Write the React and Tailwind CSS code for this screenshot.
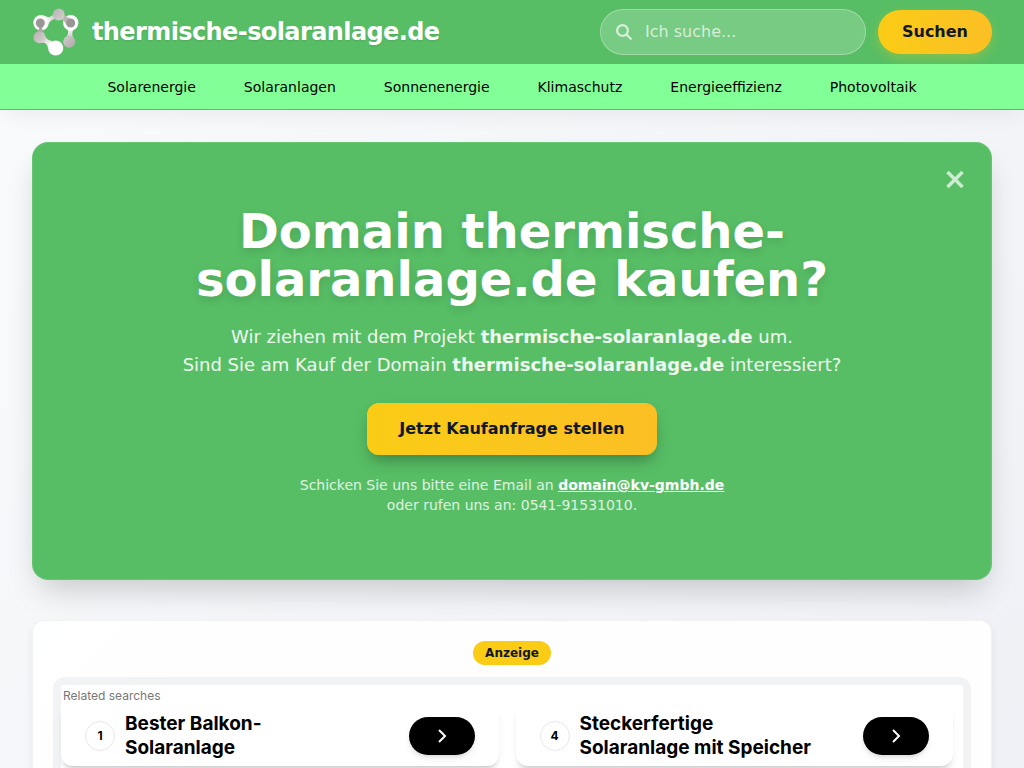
import { useState } from "react";

const navItems = [
  "Solarenergie",
  "Solaranlagen",
  "Sonnenenergie",
  "Klimaschutz",
  "Energieeffizienz",
  "Photovoltaik",
];

const relatedSearches = [
  { number: 1, title: "Bester Balkon-Solaranlage" },
  { number: 4, title: "Steckerfertige Solaranlage mit Speicher" },
];

function Logo() {
  return (
    <svg className="h-12 w-12 shrink-0" viewBox="0 0 48 48" aria-hidden="true">
      <defs>
        <linearGradient id="ball" x1="0" y1="0" x2="1" y2="1">
          <stop offset="0" stopColor="#b5afaf" />
          <stop offset="1" stopColor="#d8d4d4" />
        </linearGradient>
        <linearGradient id="ballDark" x1="0" y1="0" x2="1" y2="1">
          <stop offset="0" stopColor="#d4d0d0" />
          <stop offset="1" stopColor="#aba5a5" />
        </linearGradient>
        <linearGradient id="topLink" x1="0" y1="0" x2="1" y2="0">
          <stop offset="0" stopColor="#ffffff" />
          <stop offset="1" stopColor="#c4bfbf" />
        </linearGradient>
        <linearGradient id="rightLink" x1="0" y1="0" x2="0" y2="1">
          <stop offset="0" stopColor="#ffffff" />
          <stop offset="1" stopColor="#c4bfbf" />
        </linearGradient>
        <linearGradient id="bottomLink" x1="0" y1="0" x2="1" y2="1">
          <stop offset="0" stopColor="#c9c4c4" />
          <stop offset="1" stopColor="#ffffff" />
        </linearGradient>
      </defs>
      <path d="M13 8Q18 11 22 6L25 11Q19 10 15 18Z" fill="url(#topLink)" />
      <path d="M35 20Q38 25 33 31L42 31Q38 25 43 20Z" fill="url(#rightLink)" />
      <path d="M12 26Q14 32 20 33L16 40Q15 34 9 35Z" fill="url(#bottomLink)" />
      <circle cx="9" cy="14.700" r="7.700" fill="#fafafa" />
      <circle cx="38.700" cy="14.700" r="7.700" fill="#ffffff" />
      <path d="M30 3Q32 9 38 10L35 18Q32 11 28 11Z" fill="#bbb5b5" />
      <path d="M5 16Q10 20 3 26L13 26Q8 20 12 16Z" fill="#aaa5a5" />
      <circle cx="26.700" cy="6.500" r="5.900" fill="url(#ball)" />
      <circle cx="8.300" cy="15" r="4.500" fill="#9b9696" />
      <circle cx="38.700" cy="15" r="4.500" fill="#9b9696" />
      <circle cx="7.500" cy="29.300" r="6" fill="url(#ball)" />
      <circle cx="37.200" cy="33.700" r="6" fill="url(#ballDark)" />
      <circle cx="23.700" cy="40" r="7.600" fill="#ffffff" />
    </svg>
  );
}

function Header() {
  return (
    <header className="relative shadow-[0_10px_20px_-4px_rgba(0,0,0,0.06)]">
      <div className="flex h-16 items-center justify-between bg-[#57be65] px-8">
        <a href="#" className="flex items-center gap-3">
          <Logo />
          <span className="text-2xl font-bold tracking-tight text-white [text-shadow:0_1px_2px_rgba(0,0,0,0.1)]">
            thermische-solaranlage.de
          </span>
        </a>
        <form className="flex items-center gap-3" onSubmit={(e) => e.preventDefault()}>
          <div className="relative">
            <svg
              className="absolute top-1/2 left-4 h-4 w-4 -translate-y-1/2 text-white/70"
              viewBox="0 0 16 16"
              fill="none"
              stroke="currentColor"
              strokeWidth="2.200"
            >
              <circle cx="6.500" cy="6.500" r="5.400" />
              <path d="M10.500 10.500L15.500 15.500" />
            </svg>
            <input
              type="search"
              aria-label="Suche"
              placeholder="Ich suche..."
              className="h-[46px] w-[266px] rounded-full border border-white/30 bg-white/20 pr-4 pb-[2px] pl-11 text-base text-white outline-none placeholder:text-white/70"
            />
          </div>
          <button
            type="submit"
            className="h-11 rounded-full bg-linear-to-r from-[#facc15] to-[#fbbf24] px-6 text-base font-bold text-gray-900 shadow-[0_4px_12px_rgba(250,204,21,0.3)]"
          >
            Suchen
          </button>
        </form>
      </div>
      <nav className="relative flex justify-center gap-12 border-b border-[#57be65] bg-[#82ff96] pt-[13px] pb-3 text-sm text-black">
        {navItems.map((item) => (
          <a key={item} href="#">
            {item}
          </a>
        ))}
      </nav>
    </header>
  );
}

function DomainOffer({ onClose }) {
  return (
    <section className="relative mb-10 rounded-2xl border border-white/10 bg-[#57be65] p-16 text-center text-white shadow-[0_16px_32px_-8px_rgba(0,0,0,0.2)]">
      <button
        type="button"
        aria-label="Schließen"
        onClick={onClose}
        className="absolute top-5 right-5 flex h-8 w-8 items-center justify-center text-white/70"
      >
        <svg
          className="h-5 w-5"
          viewBox="0 0 20 20"
          fill="none"
          stroke="currentColor"
          strokeWidth="3.500"
        >
          <path d="M2.500 3L17.500 18M17.500 3L2.500 18" />
        </svg>
      </button>
      <h1 className="mb-5 text-5xl font-bold [text-shadow:0_4px_8px_rgba(0,0,0,0.12)]">
        Domain thermische-
        <br />
        solaranlage.de kaufen?
      </h1>
      <p className="mb-6 text-lg text-white/90">
        Wir ziehen mit dem Projekt <strong>thermische-solaranlage.de</strong> um.
        <br />
        Sind Sie am Kauf der Domain <strong>thermische-solaranlage.de</strong> interessiert?
      </p>
      <a
        href="#"
        className="inline-flex h-[52px] items-center rounded-xl bg-linear-to-r from-[#facc15] to-[#fbbf24] px-8 text-base font-bold text-gray-900 shadow-[0_8px_16px_-4px_rgba(0,0,0,0.35)]"
      >
        Jetzt Kaufanfrage stellen
      </a>
      <p className="mt-5 text-sm text-white/80">
        Schicken Sie uns bitte eine Email an{" "}
        <a href="mailto:domain@kv-gmbh.de" className="font-bold text-white underline">
          domain@kv-gmbh.de
        </a>
        <br />
        oder rufen uns an: 0541-91531010.
      </p>
    </section>
  );
}

function SearchCard({ number, title }) {
  return (
    <a
      href="#"
      className="flex items-center rounded-b-xl bg-white px-6 pt-[6px] pb-[6px] text-black shadow-[0_5px_5px_-3px_rgba(0,0,0,0.2),0_8px_8px_rgba(0,0,0,0.04)]"
    >
      <span className="flex h-[30px] w-[30px] shrink-0 items-center justify-center rounded-full border border-gray-200 text-xs font-bold">
        {number}
      </span>
      <span className="ml-[10px] flex-1 pr-12 text-[19px] leading-6 font-bold">{title}</span>
      <span className="flex h-[38px] w-[66px] shrink-0 items-center justify-center rounded-full bg-black text-white shadow-md">
        <svg
          className="h-4 w-4"
          viewBox="0 0 16 16"
          fill="none"
          stroke="currentColor"
          strokeWidth="2"
        >
          <path d="M5 2L11 8L5 14" />
        </svg>
      </span>
    </a>
  );
}

export default function App() {
  const [showOffer, setShowOffer] = useState(true);

  return (
    <div className="min-h-screen bg-linear-135 from-[#fafbfc] to-[#eff0f5] font-['DejaVu_Sans',sans-serif]">
      <Header />
      <main className="px-8 py-8">
        {showOffer && <DomainOffer onClose={() => setShowOffer(false)} />}
        <section className="rounded-xl border border-black/5 bg-white/90 p-5 shadow-[0_4px_8px_rgba(0,0,0,0.06)]">
          <div className="flex justify-center">
            <span className="rounded-full bg-[#facc15] px-3 py-1 text-xs font-bold text-gray-900">
              Anzeige
            </span>
          </div>
          <div className="mt-3 rounded-xl bg-[#f2f3f5] p-2">
            <div className="bg-white pr-[10px] pb-5 font-['Inter',sans-serif]">
              <h2 className="pt-[3px] pb-[2px] pl-[2px] text-xs text-[#777777]">
                Related searches
              </h2>
              <div className="grid grid-cols-2 gap-[17px]">
                {relatedSearches.map((item) => (
                  <SearchCard key={item.number} number={item.number} title={item.title} />
                ))}
              </div>
            </div>
          </div>
        </section>
      </main>
    </div>
  );
}
